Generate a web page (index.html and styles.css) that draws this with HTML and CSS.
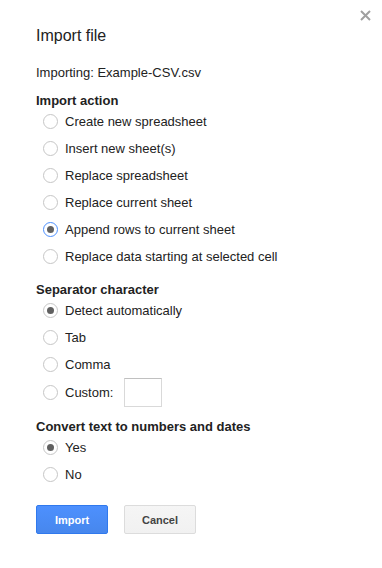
FILE: index.html
```html
<!DOCTYPE html>
<html lang="en">
<head>
<meta charset="utf-8">
<title>Import file</title>
<link rel="stylesheet" href="styles.css">
</head>
<body>
<div class="dialog">
  <button class="close" aria-label="Close">
    <svg width="11" height="11" viewBox="0 0 11 11"><path d="M1 1 L10 10 M10 1 L1 10" stroke="#a0a0a0" stroke-width="2" fill="none"/></svg>
  </button>
  <div class="title">Import file</div>
  <div class="file">Importing: Example-CSV.csv</div>

  <div class="section">
    <div class="heading">Import action</div>
    <div class="opt"><span class="radio"></span><span class="label">Create new spreadsheet</span></div>
    <div class="opt"><span class="radio"></span><span class="label">Insert new sheet(s)</span></div>
    <div class="opt"><span class="radio"></span><span class="label">Replace spreadsheet</span></div>
    <div class="opt"><span class="radio"></span><span class="label">Replace current sheet</span></div>
    <div class="opt"><span class="radio checked focused"></span><span class="label">Append rows to current sheet</span></div>
    <div class="opt"><span class="radio"></span><span class="label">Replace data starting at selected cell</span></div>
  </div>

  <div class="section">
    <div class="heading">Separator character</div>
    <div class="opt"><span class="radio checked"></span><span class="label">Detect automatically</span></div>
    <div class="opt"><span class="radio"></span><span class="label">Tab</span></div>
    <div class="opt"><span class="radio"></span><span class="label">Comma</span></div>
    <div class="opt custom"><span class="radio"></span><span class="label">Custom:</span><span class="textbox"></span></div>
  </div>

  <div class="section">
    <div class="heading">Convert text to numbers and dates</div>
    <div class="opt"><span class="radio checked"></span><span class="label">Yes</span></div>
    <div class="opt"><span class="radio"></span><span class="label">No</span></div>
  </div>

  <div class="buttons">
    <button class="btn primary">Import</button>
    <button class="btn">Cancel</button>
  </div>
</div>
</body>
</html>
```

FILE: styles.css
```css
html, body {
  margin: 0;
  padding: 0;
  background: #fff;
}
body {
  font-family: "Liberation Sans", Arial, sans-serif;
  color: #222;
  font-size: 13px;
}
.dialog {
  position: relative;
  width: 382px;
  height: 568px;
  box-sizing: border-box;
  padding: 26px 36px 0 36px;
}
.close {
  position: absolute;
  top: 10px;
  left: 360px;
  width: 11px;
  height: 11px;
  padding: 0;
  border: 0;
  background: none;
  display: block;
}
.close svg { display: block; }
.title {
  font-size: 16px;
  line-height: 20px;
  color: #222;
}
.file {
  margin-top: 19px;
  line-height: 15px;
}
.section {
  margin-top: 12px;
}
.file + .section {
  margin-top: 13px;
}
.heading {
  font-weight: bold;
  line-height: 15px;
}
.opt {
  display: flex;
  align-items: center;
  height: 27px;
  padding-left: 7px;
}
.opt.custom {
  height: 29px;
}
.radio {
  position: relative;
  width: 13px;
  height: 13px;
  border: 1px solid #c6c6c6;
  border-radius: 50%;
  background: #fff;
  flex: none;
  margin-right: 7px;
}
.radio.focused {
  border-color: #4d90fe;
}
.radio.checked::after {
  content: "";
  position: absolute;
  left: 3px;
  top: 3px;
  width: 7px;
  height: 7px;
  border-radius: 50%;
  background: #606060;
}
.label {
  line-height: 15px;
  white-space: nowrap;
}
.textbox {
  margin-left: 11px;
  width: 36px;
  height: 27px;
  border: 1px solid #d9d9d9;
  border-top-color: #c0c0c0;
  background: #fff;
}
.buttons {
  display: flex;
  gap: 16px;
  margin-top: 17px;
}
.btn {
  width: 72px;
  height: 29px;
  box-sizing: border-box;
  border: 1px solid #dcdcdc;
  border-radius: 2px;
  background: linear-gradient(#f5f5f5, #f1f1f1);
  color: #444;
  font-family: "Liberation Sans", Arial, sans-serif;
  font-size: 11px;
  font-weight: bold;
  padding: 0;
}
.btn.primary {
  border-color: #3079ed;
  background: linear-gradient(#4d90fe, #4787ed);
  color: #fff;
}
```
